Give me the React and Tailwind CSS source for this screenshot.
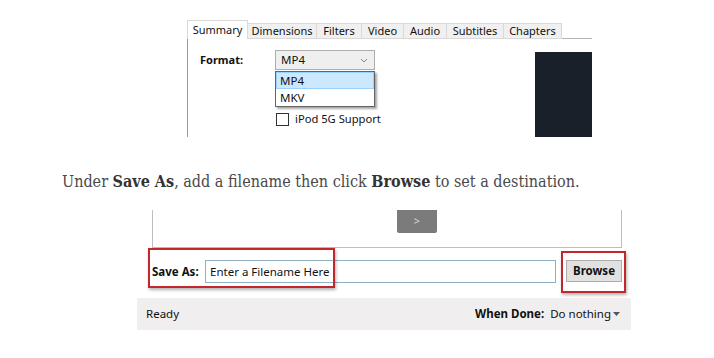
import React from "react";

const ui = { fontFamily: '"Noto Sans", "Open Sans", sans-serif' };

function Tab({ label, active, w }) {
  if (active) {
    return (
      <div className={`h-[19px] ${w} bg-white border border-b-0 border-[#d9d9d9] flex items-center justify-center text-[11px] text-[#111]`}>
        {label}
      </div>
    );
  }
  return (
    <div className={`h-[16px] ${w} bg-[#f0f0f0] border border-l-0 border-[#d9d9d9] flex items-center justify-center text-[11px] text-[#111]`}>
      {label}
    </div>
  );
}

function Checkbox() {
  return <div className="w-[13px] h-[13px] border border-[#333] bg-white" />;
}

export default function App() {
  return (
    <div className="w-[714px] h-[358px] bg-white relative overflow-hidden" style={ui}>
      {/* Top screenshot */}
      <div className="ml-[187px] pt-[20px] w-[405px]">
        <div className="flex items-end">
          <Tab label="Summary" active w="w-[61px]" />
          <Tab label="Dimensions" w="w-[69px]" />
          <Tab label="Filters" w="w-[45px]" />
          <Tab label="Video" w="w-[42px]" />
          <Tab label="Audio" w="w-[43px]" />
          <Tab label="Subtitles" w="w-[57px]" />
          <Tab label="Chapters" w="w-[58px]" />
          <div className="flex-1 border-b border-[#b5b5b5]" />
        </div>
        <div className="h-[98px] border-l border-[#9a9a9a] flex">
          <div className="flex-1 pl-[12px] pt-[11px]">
            <div className="flex items-center">
              <div className="w-[75px] text-[11px] font-bold text-[#111]">Format:</div>
              <div className="relative">
                <div className="w-[100px] h-[20px] border border-[#acacac] bg-[#efefef] flex items-center justify-between px-[5px] text-[11.5px] text-[#111]">
                  <span>MP4</span>
                  <svg width="8" height="5" viewBox="0 0 8 5" className="mr-[1px]">
                    <path d="M1 1 L4 4 L7 1" fill="none" stroke="#888" strokeWidth="1" />
                  </svg>
                </div>
                <div className="absolute left-0 top-[21px] w-[100px] h-[36px] bg-white border border-[#646464] shadow-[2px_2px_2px_rgba(0,0,0,0.35)] z-10 text-[11.5px] text-[#111]">
                  <div className="h-[17px] bg-[#cce8ff] border border-[#99d1ff] flex items-center pl-[3px]">MP4</div>
                  <div className="h-[17px] flex items-center pl-[4px]">MKV</div>
                </div>
              </div>
            </div>
            <div className="ml-[76px] mt-[23px] flex items-center">
              <Checkbox />
            </div>
            <div className="ml-[76px] mt-[5px] flex items-center gap-[6px] text-[11.2px] text-[#111]">
              <Checkbox />
              <span>iPod 5G Support</span>
            </div>
          </div>
          <div className="w-[57px] mt-[13px] bg-[#19202a]" />
        </div>
      </div>

      {/* Instruction text */}
      <p
        className="ml-[62px] mt-[34px] text-[16px] leading-[22px] text-[#4a4a4a]"
        style={{ fontFamily: '"DejaVu Serif", serif', fontStretch: "condensed" }}
      >
        Under <b className="text-[#333]">Save As</b>, add a filename then click <b className="text-[#333]">Browse</b> to set a destination.
      </p>

      {/* Bottom screenshot */}
      <div className="ml-[137px] w-[494px] mt-[17px]">
        <div className="ml-[15px] mr-[9px] h-[38px] border-l border-r border-b border-[#bdbdbd] flex pl-[244px]">
          <div className="w-[40px] h-[23px] bg-[#7b7b7b] rounded-b-[2px] flex items-center justify-center text-[11px] text-[#d8d8d8]">
            &gt;
          </div>
        </div>
        <div className="relative h-[50px] flex items-start pt-[12px]">
          <div className="absolute left-[11px] top-0 w-[187px] h-[40px] border-2 border-[#c1272d] shadow-[1px_2px_3px_rgba(0,0,0,0.3)]" />
          <div className="absolute left-[424px] top-[3px] w-[65px] h-[42px] border-2 border-[#c1272d] shadow-[1px_2px_3px_rgba(0,0,0,0.3)]" />
          <div className="w-[68px] pl-[15px] h-[23px] flex items-center text-[11.5px] font-bold text-[#111]">Save As:</div>
          <div className="w-[351px] h-[23px] border border-[#8fb0c2] bg-white flex items-center pl-[4px] text-[11.5px] text-[#111]">
            Enter a Filename Here
          </div>
          <div className="ml-[10px] w-[56px] h-[22px] border border-[#adadad] bg-[#e1e1e1] flex items-center justify-center text-[11.5px] font-bold text-[#111]">
            Browse
          </div>
        </div>
        <div className="h-[32px] bg-[#f0eeee] flex items-center justify-between pl-[9px] pr-[11px] text-[11.5px] text-[#111]">
          <span>Ready</span>
          <div className="flex items-center">
            <span className="font-bold">When Done:</span>
            <span className="ml-[6px]">Do nothing</span>
            <svg width="7" height="4" viewBox="0 0 7 4" className="ml-[2px]">
              <path d="M0 0 L7 0 L3.5 4 Z" fill="#555" />
            </svg>
          </div>
        </div>
      </div>
    </div>
  );
}
